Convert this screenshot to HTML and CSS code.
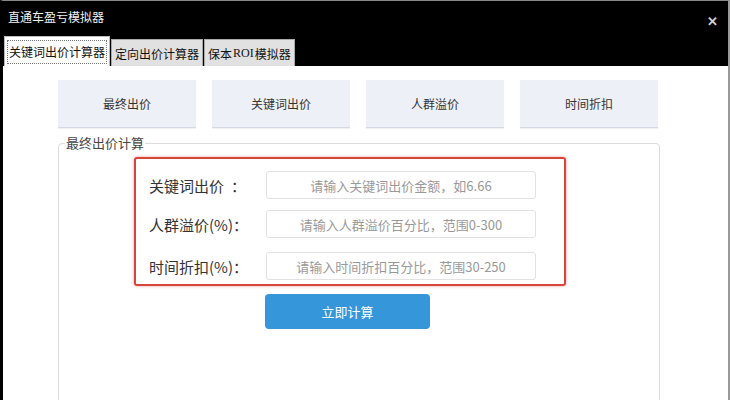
FILE: index.html
```html
<!DOCTYPE html>
<html lang="zh">
<head>
<meta charset="utf-8">
<title>直通车盈亏模拟器</title>
<link rel="stylesheet" href="styles.css">
</head>
<body>
<div class="window">
  <div class="titlebar">
    <span class="title">直通车盈亏模拟器</span>
    <span class="close">✕</span>
  </div>
  <div class="tabbar">
    <div class="tab active"><span class="focus">关键词出价计算器</span></div>
    <div class="tab">定向出价计算器</div>
    <div class="tab">保本<span class="latin">ROI</span>模拟器</div>
  </div>
  <div class="content">
    <div class="modes">
      <div class="mode">最终出价</div>
      <div class="mode">关键词出价</div>
      <div class="mode">人群溢价</div>
      <div class="mode">时间折扣</div>
    </div>
    <fieldset class="group">
      <legend>最终出价计算</legend>
      <div class="highlight">
        <div class="row r1">
          <label class="lbl">关键词出价<span class="gap"></span>：</label>
          <input class="field" type="text" placeholder="请输入关键词出价金额，如6.66">
        </div>
        <div class="row r2">
          <label class="lbl">人群溢价(%)：</label>
          <input class="field" type="text" placeholder="请输入人群溢价百分比，范围0-300">
        </div>
        <div class="row r3">
          <label class="lbl">时间折扣(%)：</label>
          <input class="field" type="text" placeholder="请输入时间折扣百分比，范围30-250">
        </div>
      </div>
      <button class="calc" type="button">立即计算</button>
    </fieldset>
  </div>
</div>
</body>
</html>
```

FILE: styles.css
```css
* { box-sizing: border-box; }
html, body { margin: 0; padding: 0; }
body {
  width: 730px;
  height: 400px;
  overflow: hidden;
  font-family: "Noto Sans CJK SC", "Noto Sans", sans-serif;
  background: #fff;
}
.window {
  width: 730px;
  height: 400px;
  border-top: 1px solid #888;
  border-left: 3px solid #000;
  border-right: 2px solid #999;
  display: flex;
  flex-direction: column;
  overflow: hidden;
}
.titlebar {
  flex-shrink: 0;
  height: 35px;
  background: #000;
  display: flex;
  align-items: center;
  justify-content: space-between;
  padding: 0 10px 0 5px;
  color: #fff;
}
.title {
  font-size: 12px;
  margin-top: -5px;
  color: #f2f2f2;
}
.close {
  font-size: 13px;
  color: #cfcfcf;
  font-weight: bold;
  margin-top: 3px;
}
.tabbar {
  flex-shrink: 0;
  height: 30px;
  background: #000;
  display: flex;
  align-items: flex-end;
  padding-left: 1px;
}
.tab {
  height: 27px;
  padding: 0 3px;
  background: #e1e1e1;
  border: 1px solid #aaa;
  border-bottom: none;
  font-size: 12px;
  color: #111;
  display: flex;
  align-items: center;
  margin-right: 1px;
  white-space: nowrap;
}
.latin {
  font-family: "Liberation Serif", serif;
  font-size: 12px;
  margin: 0 1px;
}
.tab.active {
  height: 30px;
  background: #fff;
  padding: 0 2px;
  border-color: #bbb;
}
.tab.active .focus {
  border: 1px dotted #777;
  padding: 3px 1px;
  line-height: 16px;
}
.content {
  flex: 1;
  background: #fff;
  padding: 14px 0 0 55px;
}
.modes {
  display: flex;
  gap: 16px;
}
.mode {
  width: 138px;
  height: 48px;
  background: #eef0f8;
  border-bottom: 1px solid #d6d9e4;
  box-shadow: 0 1px 1px rgba(0, 0, 0, 0.05);
  display: flex;
  align-items: center;
  justify-content: center;
  font-size: 12px;
  color: #333;
}
.group {
  margin: 6px 0 0 0;
  width: 602px;
  height: 300px;
  border: 1px solid #dcdcdc;
  border-radius: 4px;
  padding: 0 0 0 75px;
}
.group legend {
  font-size: 13px;
  color: #444;
  padding: 0 1px;
  margin-left: -69px;
  line-height: 18px;
}
.highlight {
  margin-top: 5px;
  width: 432px;
  height: 129px;
  border: 2px solid #d8453b;
  border-radius: 3px;
  box-shadow: 0 0 3px rgba(200, 60, 50, 0.5);
  padding: 12px 0 0 13px;
}
.row {
  display: flex;
  align-items: center;
}
.r2 { margin-top: 11px; }
.r3 { margin-top: 14px; }
.lbl {
  width: 117px;
  font-size: 15px;
  color: #333;
  white-space: nowrap;
}
.gap {
  display: inline-block;
  width: 7px;
}
.field {
  width: 270px;
  height: 28px;
  border: 1px solid #e2e2e2;
  border-radius: 3px;
  font-family: "Noto Sans CJK SC", "Noto Sans", sans-serif;
  font-size: 13px;
  text-align: center;
  color: #333;
  background: #fff;
  outline: none;
}
.field::placeholder {
  color: #999;
}
.calc {
  display: block;
  margin: 8px 0 0 131px;
  width: 165px;
  height: 35px;
  border: none;
  border-radius: 4px;
  background: #3596da;
  color: #fff;
  font-family: "Noto Sans CJK SC", "Noto Sans", sans-serif;
  font-size: 13px;
}
```
